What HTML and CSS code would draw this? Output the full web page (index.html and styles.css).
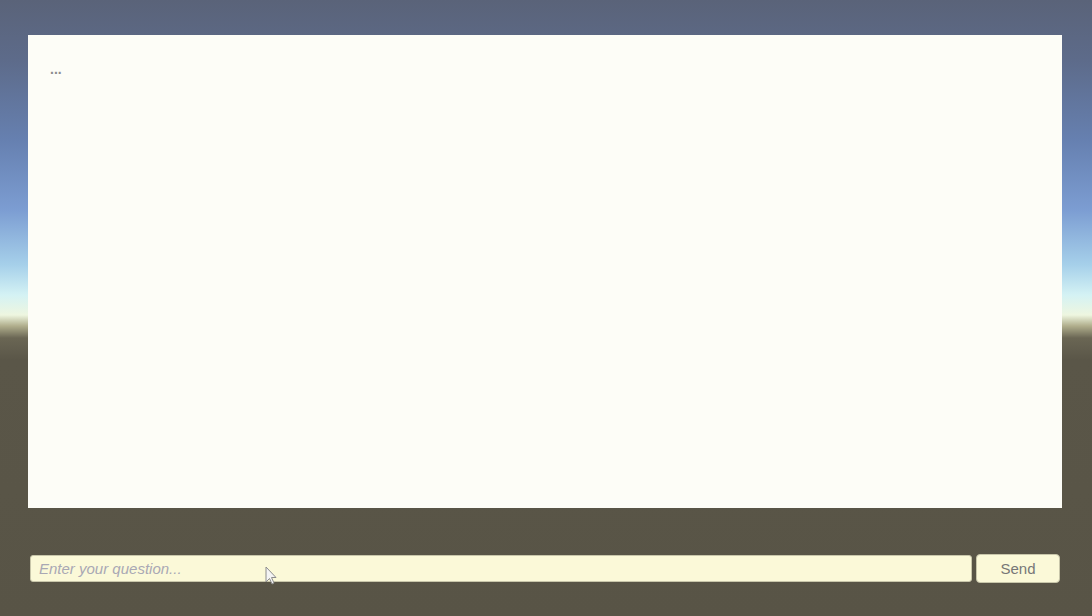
FILE: index.html
```html
<!DOCTYPE html>
<html>
<head>
<meta charset="utf-8">
<link rel="stylesheet" href="styles.css">
</head>
<body>
<div class="scene">
  <div class="panel">
    <div class="msg">...</div>
  </div>
  <div class="inputrow">
    <div class="input"><span class="placeholder">Enter your question...</span>
      <svg class="cursor" width="14" height="20" viewBox="0 0 14 20"><path d="M1 1 L1 16 L4.5 12.5 L7 18 L9 17 L6.5 11.5 L11 11.5 Z" fill="#f4f4f4" stroke="#8c8c8c" stroke-width="1"/></svg>
    </div>
    <button class="send">Send</button>
  </div>
</div>
</body>
</html>
```
FILE: styles.css
```css
html, body {
  margin: 0;
  padding: 0;
  width: 1092px;
  height: 616px;
  overflow: hidden;
}
body {
  background: linear-gradient(to bottom,
    #5a6379 0px,
    #5d6b8a 60px,
    #6680b0 140px,
    #7c9dd2 210px,
    #a6d0ea 265px,
    #d4f2f4 295px,
    #eef6e0 315px,
    #b0ae8c 326px,
    #6a6654 338px,
    #5a5648 360px,
    #585446 616px);
  font-family: "Liberation Sans", Arial, sans-serif;
}
.scene {
  display: flex;
  flex-direction: column;
  height: 616px;
  box-sizing: border-box;
  padding-top: 35px;
}
.panel {
  margin-left: 28px;
  width: 1034px;
  height: 473px;
  background: #fdfdf7;
  box-sizing: border-box;
  padding: 26px 22px;
}
.msg {
  font-size: 14px;
  font-weight: bold;
  color: #8c8c8c;
  line-height: 16px;
}
.inputrow {
  display: flex;
  align-items: center;
  gap: 4px;
  margin-top: 46px;
  padding-left: 30px;
  height: 29px;
}
.input {
  position: relative;
  width: 942px;
  height: 27px;
  box-sizing: border-box;
  background: #fbf9d8;
  border: 1px solid #c8c6aa;
  border-radius: 3px;
  padding-left: 8px;
  display: flex;
  align-items: center;
}
.placeholder {
  font-style: italic;
  font-size: 15px;
  color: #a9a8b4;
}
.cursor {
  position: absolute;
  left: 234px;
  top: 10px;
}
.send {
  width: 84px;
  height: 29px;
  background: #fbf9d8;
  border: 1px solid #c8c6aa;
  border-radius: 4px;
  font-family: "Liberation Sans", Arial, sans-serif;
  font-size: 15px;
  color: #777777;
  padding: 0;
  margin: 0;
}
```
